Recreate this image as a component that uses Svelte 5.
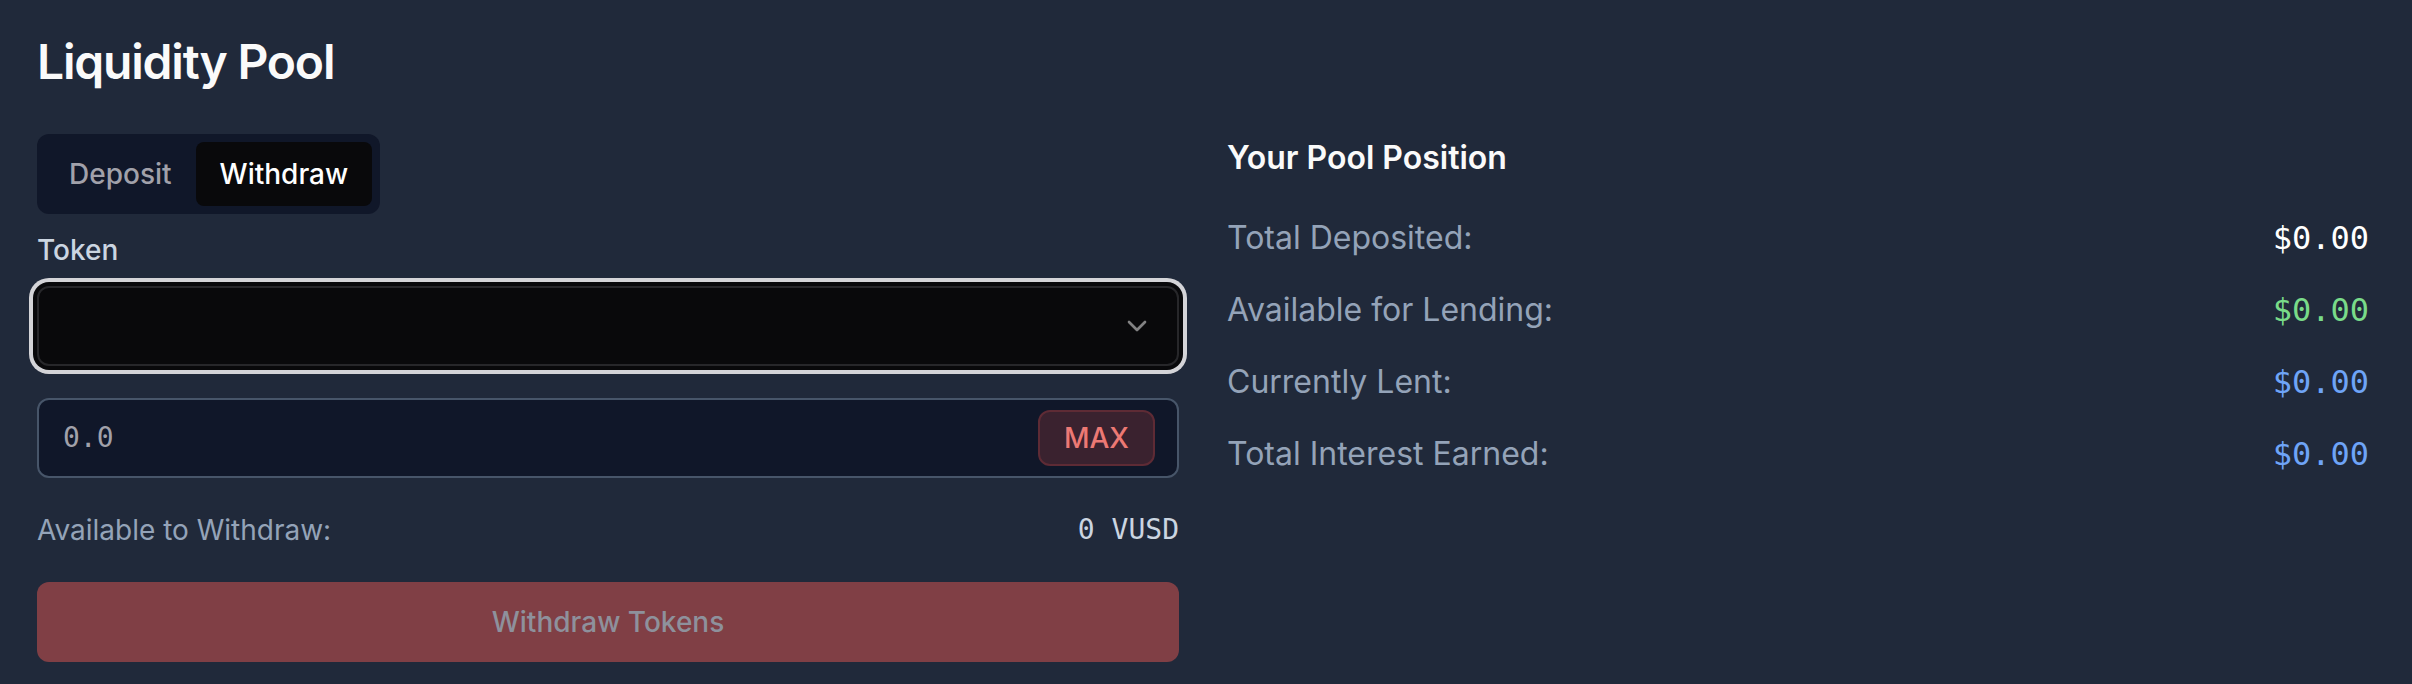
<script>
  let mode = $state('withdraw');
  let token = $state('');
  let amount = $state('');

  const tabs = [
    { id: 'deposit', label: 'Deposit' },
    { id: 'withdraw', label: 'Withdraw' }
  ];

  const position = [
    { label: 'Total Deposited:', value: '$0.00', tone: 'plain' },
    { label: 'Available for Lending:', value: '$0.00', tone: 'green' },
    { label: 'Currently Lent:', value: '$0.00', tone: 'blue' },
    { label: 'Total Interest Earned:', value: '$0.00', tone: 'blue' }
  ];
</script>

<main class="pool">
  <h2 class="title">Liquidity Pool</h2>

  <div class="columns">
    <section class="form">
      <div class="tabs" role="tablist">
        {#each tabs as tab (tab.id)}
          <button
            type="button"
            role="tab"
            class="tab"
            class:active={mode === tab.id}
            aria-selected={mode === tab.id}
            onclick={() => (mode = tab.id)}
          >{tab.label}</button>
        {/each}
      </div>

      <label class="label" for="token">Token</label>
      <div class="select-wrap">
        <select id="token" class="select" bind:value={token}>
          <option value=""></option>
        </select>
        <svg class="chevron" viewBox="0 0 24 24" aria-hidden="true">
          <path d="m6 9 6 6 6-6" />
        </svg>
      </div>

      <div class="amount">
        <input class="amount-input" type="text" inputmode="decimal" aria-label="Amount" placeholder="0.0" bind:value={amount} />
        <button type="button" class="max">MAX</button>
      </div>

      <div class="available">
        <span>Available to Withdraw:</span>
        <span class="balance">0 VUSD</span>
      </div>

      <button type="button" class="submit" disabled>Withdraw Tokens</button>
    </section>

    <section class="position">
      <h3 class="subtitle">Your Pool Position</h3>
      <dl class="stats">
        {#each position as row (row.label)}
          <div class="stat">
            <dt>{row.label}</dt>
            <dd class={row.tone}>{row.value}</dd>
          </div>
        {/each}
      </dl>
    </section>
  </div>
</main>

<style>
  :global(body) {
    margin: 0;
    background: #20293a;
  }

  .pool {
    box-sizing: border-box;
    min-height: 100vh;
    padding: 38px 43px 22px 37px;
    font-family: Inter, 'Liberation Sans', sans-serif;
    font-size: 28px;
    line-height: 40px;
    color: #fafafa;
  }

  button,
  input,
  select {
    box-sizing: border-box;
    margin: 0;
    font: inherit;
  }

  .title {
    margin: 0 0 48px;
    font-size: 48px;
    line-height: 48px;
    font-weight: 600;
    letter-spacing: -0.025em;
  }

  .columns {
    display: grid;
    grid-template-columns: 1fr 1fr;
    gap: 48px;
  }

  .form {
    display: flex;
    flex-direction: column;
    align-items: stretch;
  }

  .tabs {
    display: flex;
    align-self: flex-start;
    padding: 8px;
    border-radius: 12px;
    background: #101729;
  }

  .tab {
    padding: 12px 24px;
    border: 0;
    border-radius: 8px;
    background: transparent;
    color: #a1a1aa;
    font-weight: 500;
  }

  .tab.active {
    background: #09090b;
    color: #fff;
  }

  .label {
    margin: 16px 0;
    color: #cbd5e1;
    font-weight: 500;
  }

  .select-wrap {
    display: grid;
    align-items: center;
    margin-bottom: 32px;
  }

  .select,
  .chevron {
    grid-area: 1 / 1;
  }

  .select {
    appearance: none;
    width: 100%;
    height: 80px;
    padding: 0 64px 0 24px;
    border: 2px solid #27272a;
    border-radius: 12px;
    outline: none;
    background: #09090b;
    color: #fafafa;
    box-shadow: 0 0 0 4px #09090b, 0 0 0 8px #d4d4d8;
  }

  .chevron {
    justify-self: end;
    width: 32px;
    height: 32px;
    margin-right: 26px;
    fill: none;
    stroke: #828283;
    stroke-width: 2;
    stroke-linecap: round;
    stroke-linejoin: round;
    pointer-events: none;
  }

  .amount {
    display: flex;
    align-items: center;
    box-sizing: border-box;
    height: 80px;
    margin-bottom: 32px;
    padding: 0 22px 0 24px;
    border: 2px solid #475569;
    border-radius: 12px;
    background: #101729;
  }

  .amount-input {
    flex: 1;
    min-width: 0;
    padding: 0;
    border: 0;
    outline: none;
    background: transparent;
    color: #fff;
    font-family: 'DejaVu Sans Mono', monospace;
  }

  .amount-input::placeholder {
    color: #a1a1aa;
    opacity: 1;
  }

  .max {
    height: 56px;
    padding: 0 24px;
    border: 2px solid #5e2b35;
    border-radius: 12px;
    background: #3a222f;
    color: #ec7974;
    font-weight: 500;
  }

  .available {
    display: flex;
    justify-content: space-between;
    margin-bottom: 32px;
    color: #94a3b8;
  }

  .balance {
    color: #cbd5e1;
    font-family: 'DejaVu Sans Mono', monospace;
  }

  .submit {
    height: 80px;
    padding: 0 32px;
    border: 0;
    border-radius: 12px;
    background: #803f45;
    color: #8e919c;
    font-weight: 500;
  }

  .subtitle {
    margin: 0 0 32px;
    font-size: 32px;
    line-height: 48px;
    font-weight: 600;
  }

  .stats {
    display: grid;
    gap: 24px;
    margin: 0;
    font-size: 32px;
    line-height: 48px;
  }

  .stat {
    display: flex;
    justify-content: space-between;
  }

  dt {
    color: #94a3b8;
  }

  dd {
    margin: 0;
    font-family: 'DejaVu Sans Mono', monospace;
  }

  .plain {
    color: #fff;
  }

  .green {
    color: #79db89;
  }

  .blue {
    color: #6ea4f7;
  }
</style>
